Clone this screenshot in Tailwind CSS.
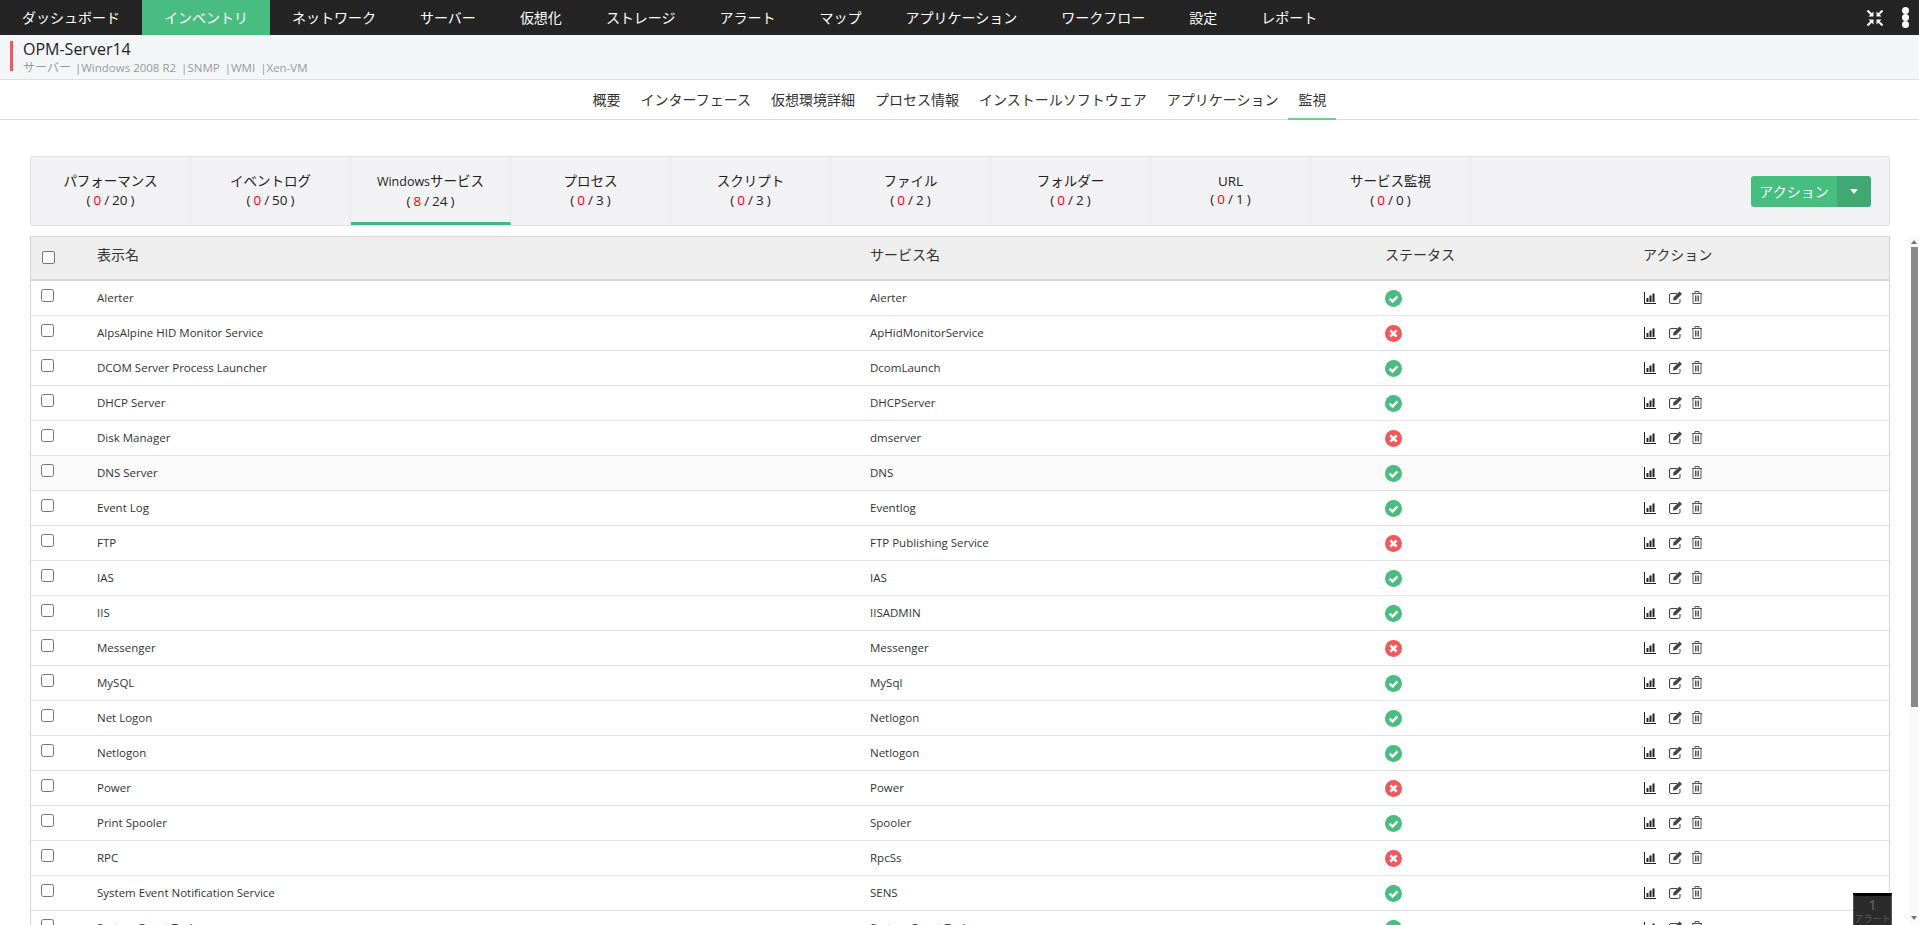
<!DOCTYPE html>
<html lang="ja">
<head>
  <meta charset="UTF-8"/>
  <title>OPM-Server14</title>
  <script src="https://cdn.jsdelivr.net/npm/@tailwindcss/browser@4"></script>
</head>
<body class="h-[925px] overflow-hidden bg-white text-[#222] font-['Open_Sans','Noto_Sans_CJK_JP',sans-serif]">

  <!-- top nav -->
  <nav class="h-[35px] bg-[#242424] flex items-center text-white text-[14px]">
    <a class="px-[22px] leading-[35px]">ダッシュボード</a>
    <a class="px-[22px] leading-[35px] bg-[#48bd7f]">インベントリ</a>
    <a class="px-[22px] leading-[35px]">ネットワーク</a>
    <a class="px-[22px] leading-[35px]">サーバー</a>
    <a class="px-[22px] leading-[35px]">仮想化</a>
    <a class="px-[22px] leading-[35px]">ストレージ</a>
    <a class="px-[22px] leading-[35px]">アラート</a>
    <a class="px-[22px] leading-[35px]">マップ</a>
    <a class="px-[22px] leading-[35px]">アプリケーション</a>
    <a class="px-[22px] leading-[35px]">ワークフロー</a>
    <a class="px-[22px] leading-[35px]">設定</a>
    <a class="px-[22px] leading-[35px]">レポート</a>
    <div class="ml-auto flex items-center gap-[19px] pr-[10px]">
      <svg width="16" height="16" viewBox="0 0 16 16" fill="#fff" stroke="#fff">
        <path d="M.5.5l4 4" stroke-width="2"/><path d="M6.500 6.500V1.500l-5 5z" stroke="none"/>
        <path d="M15.500.5l-4 4" stroke-width="2"/><path d="M9.500 6.500V1.500l5 5z" stroke="none"/>
        <path d="M.5 15.500l4-4" stroke-width="2"/><path d="M6.500 9.500v5l-5-5z" stroke="none"/>
        <path d="M15.500 15.500l-4-4" stroke-width="2"/><path d="M9.500 9.500v5l5-5z" stroke="none"/>
      </svg>
      <div class="flex flex-col">
        <span class="w-[7px] h-[7px] rounded-full bg-white"></span>
        <span class="w-[7px] h-[7px] rounded-full bg-white"></span>
        <span class="w-[7px] h-[7px] rounded-full bg-white"></span>
      </div>
    </div>
  </nav>

  <!-- device header -->
  <header class="h-[45px] bg-[#f4f5f7] border-b border-[#e0e0e0] pl-[10px] pt-[7px]">
    <div class="border-l-[3px] border-[#f4565a] pl-[10px] h-[30px]">
      <div class="text-[16px] leading-[16px] -mt-[1px] font-medium text-[#222]">OPM-Server14</div>
      <div class="text-[11.500px] leading-[16px] mt-[3px] text-[#9a9a9a] flex">
        <span class="text-[12px]">サーバー</span><span class="pl-[4px]">|</span><span>Windows 2008 R2</span><span class="pl-[5px]">|</span><span>SNMP</span><span class="pl-[5px]">|</span><span>WMI</span><span class="pl-[5px]">|</span><span>Xen-VM</span>
      </div>
    </div>
  </header>

  <!-- sub nav -->
  <div class="h-[40px] border-b border-[#dcdcdc] flex justify-center items-stretch gap-[20px] text-[14px] text-[#333]">
    <a class="leading-[39px]">概要</a>
    <a class="leading-[39px]">インターフェース</a>
    <a class="leading-[39px]">仮想環境詳細</a>
    <a class="leading-[39px]">プロセス情報</a>
    <a class="leading-[39px]">インストールソフトウェア</a>
    <a class="leading-[39px]">アプリケーション</a>
    <a class="leading-[39px] px-[10px] -mx-[10px] border-b-[2px] border-[#6fce85] h-[40px]">監視</a>
  </div>

  <main class="pl-[30px] pt-[36px]">

    <!-- monitor tabs -->
    <div class="w-[1860px] h-[70px] bg-[#f2f2f4] border border-[#e0e0e0] rounded-[3px] flex text-[13.500px] text-[#222]">
      <div class="w-[160px] border-r border-[#e8e8e8] text-center pt-[14px] leading-[19px]"><div class="leading-[20px]">パフォーマンス</div><div class="flex justify-center gap-[3px]"><span>(</span><span class="text-[#f00]">0</span><span>/</span><span>20</span><span>)</span></div></div>
      <div class="w-[160px] border-r border-[#e8e8e8] text-center pt-[14px] leading-[19px]"><div class="leading-[20px]">イベントログ</div><div class="flex justify-center gap-[3px]"><span>(</span><span class="text-[#f00]">0</span><span>/</span><span>50</span><span>)</span></div></div>
      <div class="w-[160px] border-r border-[#e8e8e8] text-center pt-[14px] leading-[19px] border-b-[3px] border-b-[#3fba7c]"><div class="leading-[20px]"><span class="text-[12.500px]">Windows</span>サービス</div><div class="flex justify-center gap-[3px]"><span>(</span><span class="text-[#f00]">8</span><span>/</span><span>24</span><span>)</span></div></div>
      <div class="w-[160px] border-r border-[#e8e8e8] text-center pt-[14px] leading-[19px]"><div class="leading-[20px]">プロセス</div><div class="flex justify-center gap-[3px]"><span>(</span><span class="text-[#f00]">0</span><span>/</span><span>3</span><span>)</span></div></div>
      <div class="w-[160px] border-r border-[#e8e8e8] text-center pt-[14px] leading-[19px]"><div class="leading-[20px]">スクリプト</div><div class="flex justify-center gap-[3px]"><span>(</span><span class="text-[#f00]">0</span><span>/</span><span>3</span><span>)</span></div></div>
      <div class="w-[160px] border-r border-[#e8e8e8] text-center pt-[14px] leading-[19px]"><div class="leading-[20px]">ファイル</div><div class="flex justify-center gap-[3px]"><span>(</span><span class="text-[#f00]">0</span><span>/</span><span>2</span><span>)</span></div></div>
      <div class="w-[160px] border-r border-[#e8e8e8] text-center pt-[14px] leading-[19px]"><div class="leading-[20px]">フォルダー</div><div class="flex justify-center gap-[3px]"><span>(</span><span class="text-[#f00]">0</span><span>/</span><span>2</span><span>)</span></div></div>
      <div class="w-[160px] border-r border-[#e8e8e8] text-center pt-[14px] leading-[19px]"><div class="leading-[20px]">URL</div><div class="flex justify-center gap-[3px] -mt-[1px]"><span>(</span><span class="text-[#f00]">0</span><span>/</span><span>1</span><span>)</span></div></div>
      <div class="w-[160px] border-r border-[#e8e8e8] text-center pt-[14px] leading-[19px]"><div class="leading-[20px]">サービス監視</div><div class="flex justify-center gap-[3px]"><span>(</span><span class="text-[#f00]">0</span><span>/</span><span>0</span><span>)</span></div></div>
      <div class="ml-auto mr-[18px] mt-[19px] h-[31px] flex rounded-[3px] overflow-hidden text-white text-[14px]">
        <span class="w-[86px] bg-[#46be80] text-center leading-[31px]">アクション</span>
        <span class="w-[34px] bg-[#40a973] flex items-center justify-center">
          <span class="w-0 h-0 border-x-[4px] border-x-transparent border-t-[5px] border-t-white"></span>
        </span>
      </div>
    </div>

    <div class="mt-[10px] flex h-[689px]">
      <!-- services table -->
      <div class="w-[1860px] overflow-hidden border-x border-[#d6d6d6]">
        <div class="h-[45px] bg-[#eeeeee] border-t border-b-[2px] border-[#d8d8d8] flex items-center pb-[8px] text-[14px] text-[#333]">
          <span class="w-[66px] pl-[11px] pt-[7px]"><span class="block w-[13px] h-[13px] border border-[#767676] rounded-[2px] bg-white"></span></span>
          <span class="w-[773px]">表示名</span>
          <span class="w-[515px]">サービス名</span>
          <span class="w-[258px]">ステータス</span>
          <span>アクション</span>
        </div>
        <div id="rows"></div>
      </div>

      <!-- scrollbar -->
      <div class="w-[10px] ml-[19px] bg-[#fafafa] flex flex-col items-center">
        <span class="mt-[4px] w-0 h-0 border-x-[3.500px] border-x-transparent border-b-[4px] border-b-[#777]"></span>
        <span class="mt-[3px] w-[7px] h-[460px] bg-[#8a8a8a]"></span>
        <span class="mt-auto mb-[5px] w-0 h-0 border-x-[3.500px] border-x-transparent border-t-[4px] border-t-[#777]"></span>
      </div>
    </div>
  </main>

  <!-- alert badge -->
  <div class="absolute left-[1853px] top-[893px] w-[39px] h-[32px] bg-[#2b2b2b] border-t-[3px] border-black border-x border-x-[#555] text-center text-[#5c5c5c]">
    <div class="text-[14px] leading-[17px] font-semibold">1</div>
    <div class="text-[9px] leading-[11px] whitespace-nowrap">アラート</div>
  </div>

  <script>
    const services = [
      ['Alerter', 'Alerter', 1],
      ['AlpsAlpine HID Monitor Service', 'ApHidMonitorService', 0],
      ['DCOM Server Process Launcher', 'DcomLaunch', 1],
      ['DHCP Server', 'DHCPServer', 1],
      ['Disk Manager', 'dmserver', 0],
      ['DNS Server', 'DNS', 1],
      ['Event Log', 'Eventlog', 1],
      ['FTP', 'FTP Publishing Service', 0],
      ['IAS', 'IAS', 1],
      ['IIS', 'IISADMIN', 1],
      ['Messenger', 'Messenger', 0],
      ['MySQL', 'MySql', 1],
      ['Net Logon', 'Netlogon', 1],
      ['Netlogon', 'Netlogon', 1],
      ['Power', 'Power', 0],
      ['Print Spooler', 'Spooler', 1],
      ['RPC', 'RpcSs', 0],
      ['System Event Notification Service', 'SENS', 1],
      ['System Event Task', 'System Event Task', 1],
    ];

    const okIcon = '<svg width="17" height="17" viewBox="0 0 17 17"><circle cx="8.500" cy="8.500" r="8.500" fill="#48bd7f"/><path d="M4.500 8.700l3 2.800 5-5.200" fill="none" stroke="#fff" stroke-width="2.400"/></svg>';
    const downIcon = '<svg width="17" height="17" viewBox="0 0 17 17"><circle cx="8.500" cy="8.500" r="8.500" fill="#f4565a"/><path d="M5.300 5.300l6.400 6.400M11.700 5.300l-6.400 6.400" fill="none" stroke="#fff" stroke-width="2.600"/></svg>';
    const actions = `
      <svg width="12" height="12" viewBox="0 0 12 12" fill="#222"><path d="M0 0h1v11h11v1H0zM2.500 6h2v4h-2zM5.500 3.500h2V10h-2zM8.500 1.500h2V10h-2z"/></svg>
      <svg width="14" height="13" viewBox="0 0 14 13" fill="none" class="ml-[13px]"><path d="M11 8v3a1.500 1.500 0 0 1-1.500 1.500h-7.500A1.500 1.500 0 0 1 .5 11V4A1.500 1.500 0 0 1 2 2.500h6" stroke="#444"/><path d="M4.500 6.500L4 9.500 7 9l6-6-2.500-2.500z" fill="#444"/></svg>
      <svg width="10" height="13" viewBox="0 0 10 13" fill="none" stroke="#555" class="ml-[9px]"><path d="M0 2.500h10M3 2.500V.5h4v2M1 2.500v10h8v-10M3.500 4.500v6M5 4.500v6M6.500 4.500v6"/></svg>`;

    document.getElementById('rows').innerHTML = services.map((s, i) => `
      <div class="h-[35px] border-b border-[#e2e2e2] flex text-[11.500px] text-[#333] ${i === 5 ? 'bg-[#fafafa]' : ''}">
        <span class="w-[66px] pl-[10px] pt-[8px]"><input type="checkbox" class="block w-[13px] h-[13px]"/></span>
        <span class="w-[773px] leading-[34px]">${s[0]}</span>
        <span class="w-[515px] leading-[34px]">${s[1]}</span>
        <span class="w-[258px] pt-[9px]">${s[2] ? okIcon : downIcon}</span>
        <span class="flex items-center pl-[1px] pb-[1px]">${actions}</span>
      </div>`).join('');
  </script>
</body>
</html>
